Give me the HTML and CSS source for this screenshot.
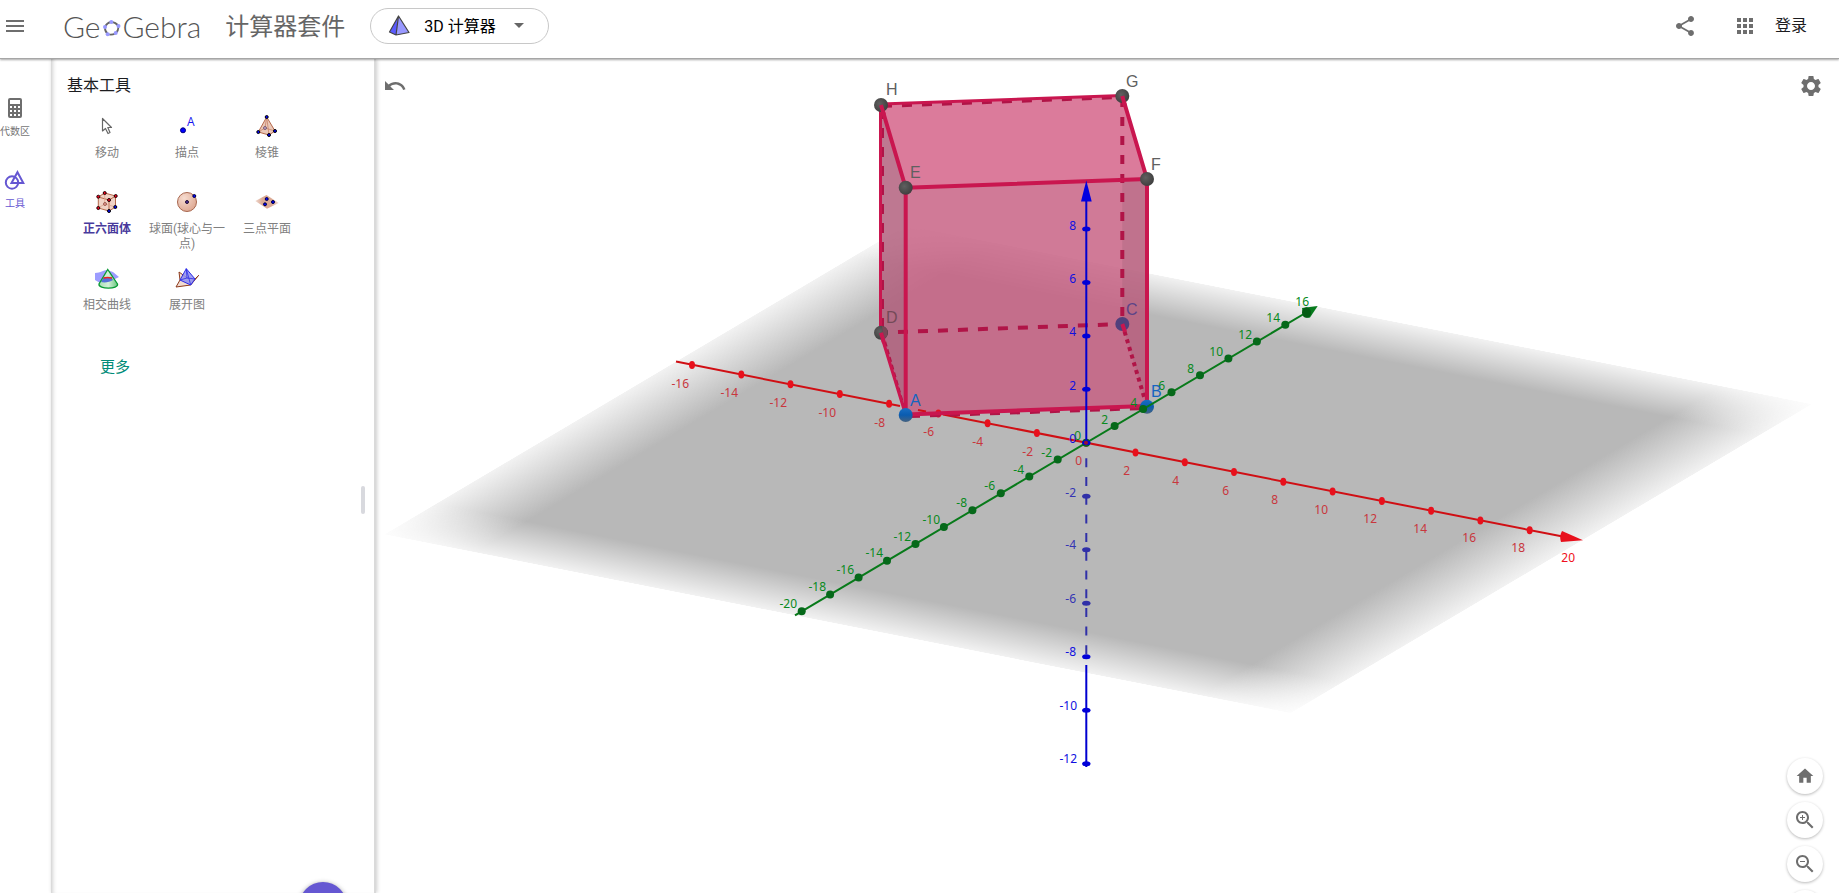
FILE: index.html
```html
<!DOCTYPE html>
<html lang="zh-CN">
<head>
<meta charset="utf-8">
<title>3D 计算器 - GeoGebra</title>
<link rel="stylesheet" href="styles.css">
</head>
<body class="app">
<header class="header">
  <button class="icon-btn menu-btn" aria-label="菜单">
    <svg width="24" height="24" viewBox="0 0 24 24"><path d="M3 18h18v-2H3v2zm0-5h18v-2H3v2zm0-7v2h18V6H3z"/></svg>
  </button>
  <a class="brand" href="#">
    <span class="logo">Ge<svg class="logo-o" width="18" height="18" viewBox="0 0 18 18"><path d="M8.300 3q4.500.3 7 4 .5 4.500-3 7.500-4 2-7.600.5Q1.500 12 2 8q2-4.500 6.300-5z" fill="none" stroke="#666" stroke-width="1.800"/><g fill="#9999ff"><circle cx="8.300" cy="3" r="2"/><circle cx="15.500" cy="7" r="2"/><circle cx="12.700" cy="14" r="2"/><circle cx="4.700" cy="15.200" r="2"/><circle cx="2" cy="8" r="2"/></g></svg>Gebra</span>
    <span class="suite">计算器套件</span>
  </a>
  <button class="app-picker">
    <svg width="22" height="22" viewBox="0 0 22 22"><path d="M10.500 1 1.500 17l6.500 3z" fill="#5b5bff"/><path d="M10.500 1 8 20l13-2.500z" fill="#9999ff"/><path d="M10.500 1 1.500 17 8 20l13-2.500zL8 20" fill="none" stroke="#444" stroke-width="1.200" stroke-linejoin="round"/></svg>
    <span class="app-name">3D 计算器</span>
    <svg class="caret" width="10" height="5" viewBox="0 0 10 5"><path d="M0 0h10L5 5z"/></svg>
  </button>
  <div class="header-actions">
    <button class="icon-btn" aria-label="分享">
      <svg width="24" height="24" viewBox="0 0 24 24"><path d="M18 16.080c-.76 0-1.440.3-1.960.77L8.910 12.700c.05-.23.09-.46.09-.7s-.04-.47-.09-.7l7.050-4.110c.54.5 1.250.81 2.040.81 1.660 0 3-1.340 3-3s-1.340-3-3-3-3 1.340-3 3c0 .24.04.47.09.7L8.040 9.810C7.500 9.310 6.790 9 6 9c-1.660 0-3 1.340-3 3s1.340 3 3 3c.79 0 1.500-.31 2.040-.81l7.120 4.160c-.05.21-.08.43-.08.65 0 1.610 1.310 2.920 2.920 2.920s2.920-1.310 2.920-2.920-1.310-2.920-2.920-2.920z"/></svg>
    </button>
    <button class="icon-btn apps-btn" aria-label="应用">
      <svg width="24" height="24" viewBox="0 0 24 24"><path d="M4 8h4V4H4v4zm6 12h4v-4h-4v4zm-6 0h4v-4H4v4zm0-6h4v-4H4v4zm6 0h4v-4h-4v4zm6-10v4h4V4h-4zm-6 4h4V4h-4v4zm6 6h4v-4h-4v4zm0 6h4v-4h-4v4z"/></svg>
    </button>
    <a class="login" href="#">登录</a>
  </div>
</header>

<div class="workspace">
  <nav class="rail">
    <button class="rail-btn">
      <svg width="24" height="24" viewBox="0 0 24 24"><path fill-rule="evenodd" d="M7 2h10a2 2 0 0 1 2 2v16a2 2 0 0 1-2 2H7a2 2 0 0 1-2-2V4a2 2 0 0 1 2-2zm0 2v4h10V4zm0 6v2h2v-2zm4 0v2h2v-2zm4 0v2h2v-2zm-8 4v2h2v-2zm4 0v2h2v-2zm4 0v2h2v-2zm-8 4v2h2v-2zm4 0v2h2v-2zm4 0v2h2v-2z"/></svg>
      <span>代数区</span>
    </button>
    <button class="rail-btn is-active">
      <svg width="24" height="24" viewBox="0 0 24 24" fill="none"><g stroke="currentColor" stroke-width="2"><circle cx="9" cy="14.500" r="6.200"/><path d="M14.500 4.200 20.300 15H8.500z"/></g></svg>
      <span>工具</span>
    </button>
  </nav>

  <aside class="panel">
    <h2 class="panel-title">基本工具</h2>
    <div class="tools">
      <button class="tool">
        <svg width="32" height="32" viewBox="0 0 32 32"><path d="M11.500 8.500v12.500l3-2.500 2.500 5 2-1-2.200-5h3.700z" fill="#fff" stroke="#666" stroke-width="1.200" stroke-linejoin="round"/></svg>
        <span>移动</span>
      </button>
      <button class="tool">
        <svg width="32" height="32" viewBox="0 0 32 32"><circle cx="12" cy="20.300" r="2.500" fill="#00f" stroke="#000080"/><text class="tool-glyph" x="16" y="16">A</text></svg>
        <span>描点</span>
      </button>
      <button class="tool">
        <svg width="32" height="32" viewBox="0 0 32 32"><path d="M15.700 7 7.300 22 18 25l6-4z" fill="#eac8b8" stroke="#b5694b"/><path d="M15.700 7 18 25M7.300 22 14 18l10 3M15.700 7 14 18" fill="none" stroke="#c98469" stroke-width=".8"/><g fill="#00f" stroke="#000"><circle cx="15.700" cy="7" r="1.500"/><circle cx="7.300" cy="22" r="1.500"/><circle cx="18" cy="25" r="1.500"/><circle cx="24" cy="21" r="1.500"/></g><circle cx="14" cy="18" r="1.500" fill="#b9a3cf" stroke="#6a4a5c" stroke-width=".8"/></svg>
        <span>棱锥</span>
      </button>
      <button class="tool is-selected">
        <svg width="32" height="32" viewBox="0 0 32 32"><path d="m7.300 11 6.400-4 11 3v11L18 25 7.300 22z" fill="#f0d2c5"/><path d="M7.300 11 13.700 7l11 3L18 14zV22L18 25V14M18 25l6.500-4V10" fill="none" stroke="#b5694b"/><path d="M13.700 7v11L7.300 22M13.700 18l11 3" fill="none" stroke="#dba58f" stroke-width=".8"/><g fill="#f00020" stroke="#200"><circle cx="13.700" cy="7" r="1.500"/><circle cx="24.700" cy="10" r="1.500"/><circle cx="7.300" cy="10.700" r="1.500"/><circle cx="18" cy="14" r="1.500"/><circle cx="7.300" cy="22" r="1.500"/></g><circle cx="14" cy="18" r="1.500" fill="#e59a94" stroke="#8b4a3c" stroke-width=".8"/><g fill="#00f" stroke="#000"><circle cx="24.300" cy="21" r="1.500"/><circle cx="18" cy="25" r="1.500"/></g></svg>
        <span>正六面体</span>
      </button>
      <button class="tool">
        <svg width="32" height="32" viewBox="0 0 32 32"><defs><radialGradient id="ball" cx=".35" cy=".3" r=".8"><stop offset="0" stop-color="#f6dcd0"/><stop offset="1" stop-color="#dca48d"/></radialGradient></defs><circle cx="16" cy="16" r="9.500" fill="url(#ball)" stroke="#a8674f"/><circle cx="16" cy="16" r="1.500" fill="#5030a0" stroke="#201030"/><circle cx="23.300" cy="10" r="1.500" fill="#00f" stroke="#000040"/></svg>
        <span>球面(球心与一点)</span>
      </button>
      <button class="tool">
        <svg width="32" height="32" viewBox="0 0 32 32"><defs><linearGradient id="sheet"><stop offset="0" stop-color="#efd9d0"/><stop offset=".3" stop-color="#dba994"/><stop offset=".7" stop-color="#dba994"/><stop offset="1" stop-color="#f0dcd4"/></linearGradient></defs><path d="m4.300 15 11.200-6 12.200 8L16 22.700z" fill="url(#sheet)"/><g fill="#00f" stroke="#000040"><circle cx="15.700" cy="13" r="1.500"/><circle cx="22" cy="16" r="1.500"/><circle cx="14" cy="18.300" r="1.500"/></g></svg>
        <span>三点平面</span>
      </button>
      <button class="tool">
        <svg width="32" height="32" viewBox="0 0 32 32"><defs><linearGradient id="cone"><stop offset="0" stop-color="#a8dfb4"/><stop offset=".5" stop-color="#d4f0d8"/><stop offset="1" stop-color="#6cc781"/></linearGradient></defs><path d="M4 11c6 0 8-3 12-3l6 2 6 5-6 3-13 3-5-3z" fill="#9c9cff"/><path d="M16.700 7.500 8 22c-1 5.500 20 5.500 18.500 0z" fill="url(#cone)"/><path d="M12.500 15.500 10 20c4 1 9 0 12-2l-1.500-2.500z" fill="#5570d8"/><path d="M16.700 7.500 8 22c-1 5.500 20 5.500 18.500 0z" fill="none" stroke="#0a9a35" stroke-width="1.300"/><path d="M12.500 16q4-1 8.500 0" fill="none" stroke="#f02020" stroke-width="1.500"/></svg>
        <span>相交曲线</span>
      </button>
      <button class="tool">
        <svg width="32" height="32" viewBox="0 0 32 32"><path d="M9 18 8 10l9 6.500M24 17l3.700-3.700L19.700 23 5 25l4-7" fill="#f2dcd1" stroke="#8d3a1c"/><path d="M15.300 6.700 9 18l10.700 5 4.300-6z" fill="#8f8ff0" fill-opacity=".85" stroke="#2b2be8"/><path d="M15.300 6.700 19.700 23M9 18l7-2 8 1M15.300 6.700 16 16" fill="none" stroke="#2b2be8" stroke-width=".8"/></svg>
        <span>展开图</span>
      </button>
    </div>
    <button class="more">更多</button>
    <div class="drag-handle"></div>
    <button class="fab" aria-label="帮助"></button>
  </aside>

  <main class="view">
    <svg class="scene" viewBox="376 59 1463 834" role="img" aria-label="3D 视图">
      <defs>
        <linearGradient id="fade-u"><stop offset="0" stop-color="#b8b8b8" stop-opacity=".18"/><stop offset=".1" stop-color="#b8b8b8"/><stop offset=".9" stop-color="#b8b8b8"/><stop offset="1" stop-color="#b8b8b8" stop-opacity=".18"/></linearGradient>
        <linearGradient id="fade-v" x2="0" y2="1"><stop offset="0" stop-color="#fff" stop-opacity=".18"/><stop offset=".1" stop-color="#fff"/><stop offset=".9" stop-color="#fff"/><stop offset="1" stop-color="#fff" stop-opacity=".18"/></linearGradient>
        <mask id="plane-mask" maskUnits="userSpaceOnUse" x="0" y="0" width="1000" height="1000"><rect width="1000" height="1000" fill="url(#fade-v)"/></mask>
        <radialGradient id="dark-ball" cx=".4" cy=".4" r=".6"><stop offset="0" stop-color="#606060"/><stop offset="1" stop-color="#404040"/></radialGradient>
        <linearGradient id="blue-ball" x2="0" y2="1"><stop offset="0" stop-color="#1a6fc4"/><stop offset=".5" stop-color="#0a5cb0"/><stop offset="1" stop-color="#46627f"/></linearGradient>
        <marker id="tick-x" markerUnits="userSpaceOnUse" markerWidth="10" markerHeight="10" refX="5" refY="5"><ellipse cx="5" cy="5" rx="3" ry="4" fill="#e8101c"/></marker>
        <marker id="tick-y" markerUnits="userSpaceOnUse" markerWidth="10" markerHeight="10" refX="5" refY="5"><circle cx="5" cy="5" r="4" fill="#06691a"/></marker>
        <marker id="tick-z" markerUnits="userSpaceOnUse" markerWidth="10" markerHeight="6" refX="5" refY="3"><ellipse cx="5" cy="3" rx="4.200" ry="2.500" fill="#0000d8"/></marker>
        <marker id="tick-z-dim" markerUnits="userSpaceOnUse" markerWidth="10" markerHeight="6" refX="5" refY="3"><ellipse cx="5" cy="3" rx="4.200" ry="2.500" fill="#3030a8"/></marker>
      </defs>

      <g transform="matrix(.9067 .1788 .5218 -.3093 384 534.5)"><rect width="1000" height="1000" fill="url(#fade-u)" mask="url(#plane-mask)"/></g>

      <!-- cube faces -->
      <path d="M881 105 905.700 187.700V415L881 332.700z" fill="#b05a79" fill-opacity=".82"/>
      <path d="M881 105 1122.300 96 1147 179 905.700 187.700z" fill="#d35e85" fill-opacity=".82"/>
      <path d="M905.700 187.700 1147 179V406.700L905.700 415z" fill="#c65f82" fill-opacity=".83"/>
      <path d="M1122.300 180 1147 179V406.700L1122.300 324z" fill="#905a70" fill-opacity=".25"/>

      <!-- x axis -->
      <path d="M676 361.600 900 406M943 414.500 1564 536.800" class="axis axis-x"/>
      <path d="M918 410l8 1.500" class="axis axis-x"/>
      <polyline class="ticks-x" points="642.700,353 692,364.900 741.300,374.600 790.500,384.300 839.800,394.100 889.100,403.800 938.400,413.500 987.600,423.300 1036.900,433 1086.200,442.700 1135.500,452.500 1184.800,462.200 1234,471.900 1283.300,481.700 1332.600,491.400 1381.900,501.100 1431.100,510.800 1480.400,520.600 1529.700,530.300 1582,540"/>
      <path d="M1562 531 1583 540.300 1561 542q-2-5.500 1-11z" fill="#e8101c"/>

      <!-- hidden cube edges -->
      <g class="edge edge-hidden">
        <path d="M1122.300 324V96" stroke-dasharray="9 10" stroke-dashoffset="-8"/>
        <path d="M881 332.700 1122.300 324" stroke-dasharray="10 10" stroke-dashoffset="3"/>
        <path d="M1122.300 324 1147 406.700" stroke-dasharray="4 4"/>
        <path d="M882 106 1120 97" stroke-dasharray="10 10"/>
        <path d="M882 109V332" stroke-dasharray="10 9"/>
        <path d="M883 334 905 410" stroke-dasharray="5 3" stroke-width="2"/>
        <path d="M910 416 1144 408" stroke-dasharray="10 10"/>
      </g>
      <!-- visible cube edges -->
      <g class="edge">
        <path d="M880.500 105V332.700L905.700 415" stroke-width="3"/>
        <path d="M905.700 414.500 1147 406"/>
        <path d="M881 104 1122.300 95.500" stroke-width="3"/>
        <path d="M881 105 905.700 187.700 1147 179 1122.300 96M905.700 187.700V415M1147 179V406.700"/>
      </g>

      <circle cx="881" cy="105" r="7" fill="url(#dark-ball)"/>
      <circle cx="1122.300" cy="96" r="7" fill="url(#dark-ball)"/>
      <circle cx="905.700" cy="187.700" r="7" fill="url(#dark-ball)"/>
      <circle cx="1147" cy="179" r="7" fill="url(#dark-ball)"/>
      <circle cx="881" cy="332.700" r="7" fill="url(#dark-ball)"/>
      <path d="M882 326a7 7 0 0 1 2 13z" fill="#7a4656"/>
      <circle cx="1122.300" cy="324" r="7" fill="#50407c"/>
      <circle cx="905.700" cy="415" r="7" fill="url(#blue-ball)"/>
      <circle cx="1147" cy="406.700" r="7" fill="url(#blue-ball)"/>
      <path d="M881 332.700 884 343M881 105 884 115M1122.300 324 1125 332M1122.300 96 1125 106" class="edge" stroke-width="3"/>

      <!-- y axis -->
      <path d="M795 615.300 1308 311.500" class="axis axis-y"/>
      <polyline class="ticks-y" points="773,628 801.700,611.300 830.100,594.500 858.600,577.600 887,560.800 915.500,543.900 943.900,527 972.400,510.200 1000.800,493.300 1029.300,476.500 1057.700,459.600 1086.200,442.700 1114.600,425.900 1143.100,409 1171.500,392.200 1200,375.300 1228.400,358.400 1256.900,341.600 1285.300,324.700 1313,308"/>
      <path d="M1302 308 1317.700 306 1310 317.500q-7 2-8-9.500z" fill="#067a1c"/>
      <ellipse cx="1306.500" cy="312.500" rx="4.500" ry="5.200" fill="#045c14"/>

      <!-- z axis -->
      <path d="M1086.300 200V442.700M1086.300 665V767" class="axis axis-z"/>
      <path d="M1086.300 458.300V656" class="axis axis-z-dim" stroke-dasharray="9 9.700"/>
      <polyline class="ticks-z" points="1086.300,180 1086.300,229 1086.300,282.500 1086.300,336 1086.300,389.300 1086.300,442.700 1086.300,449"/>
      <polyline class="ticks-z-dim" points="1086.300,449 1086.300,496.200 1086.300,549.700 1086.300,603.200 1086.300,650"/>
      <polyline class="ticks-z" points="1086.300,650 1086.300,656.700 1086.300,710.200 1086.300,763.700 1086.300,767"/>
      <path d="M1086.300 180.500 1091.700 201.500H1081z" fill="#0000e0"/>
      <circle cx="1086" cy="442.700" r="2" fill="#9a1030"/>

      <g class="num num-x">
        <text x="689" y="388">-16</text><text x="738" y="397">-14</text><text x="787" y="407">-12</text><text x="836" y="417">-10</text><text x="885" y="427">-8</text><text x="934" y="436">-6</text><text x="983" y="446">-4</text><text x="1033" y="456">-2</text><text x="1082" y="465">0</text><text x="1130" y="475">2</text><text x="1179" y="485">4</text><text x="1229" y="495">6</text><text x="1278" y="504">8</text><text x="1328" y="514">10</text><text x="1377" y="523">12</text><text x="1427" y="533">14</text><text x="1476" y="542">16</text><text x="1525" y="552">18</text><text x="1575" y="562" class="num-edge">20</text>
      </g>
      <g class="num num-y">
        <text x="797" y="608">-20</text><text x="826" y="591">-18</text><text x="854" y="574">-16</text><text x="883" y="557">-14</text><text x="911" y="541">-12</text><text x="940" y="524">-10</text><text x="967" y="507">-8</text><text x="995" y="490">-6</text><text x="1024" y="474">-4</text><text x="1052" y="457">-2</text><text x="1081" y="440">0</text><text x="1108" y="424">2</text><text x="1137" y="407">4</text><text x="1165" y="390">6</text><text x="1194" y="373">8</text><text x="1223" y="356">10</text><text x="1252" y="339">12</text><text x="1280" y="322">14</text><text x="1309" y="306">16</text>
      </g>
      <g class="num num-z">
        <text x="1076" y="230">8</text><text x="1076" y="283">6</text><text x="1076" y="336">4</text><text x="1076" y="390">2</text><text x="1076" y="443">0</text>
        <g class="num-z-dim"><text x="1076" y="497">-2</text><text x="1076" y="549">-4</text><text x="1076" y="603">-6</text></g>
        <text x="1076" y="656">-8</text><text x="1077" y="710">-10</text><text x="1077" y="763">-12</text>
      </g>
      <g class="pt">
        <text x="886" y="95">H</text><text x="1126" y="87">G</text><text x="910" y="178">E</text><text x="1151" y="170">F</text><text x="886" y="323" fill="#744a58">D</text><text x="1126" y="315" fill="#5c4488">C</text><text x="910" y="406" class="pt-free">A</text><text x="1151" y="397" class="pt-free">B</text>
      </g>
    </svg>

    <button class="icon-btn undo" aria-label="撤销">
      <svg width="24" height="24" viewBox="0 0 24 24"><path d="M12.500 8c-2.650 0-5.050.99-6.900 2.600L2 7v9h9l-3.620-3.620c1.390-1.160 3.160-1.880 5.120-1.880 3.540 0 6.550 2.310 7.600 5.500l2.370-.78C21.080 11.030 17.150 8 12.500 8z"/></svg>
    </button>
    <button class="icon-btn settings" aria-label="设置">
      <svg width="24" height="24" viewBox="0 0 24 24"><path d="M19.430 12.980c.04-.32.07-.64.07-.98s-.03-.66-.07-.98l2.110-1.650c.19-.15.24-.42.12-.64l-2-3.460c-.12-.22-.39-.3-.61-.22l-2.490 1c-.52-.4-1.080-.73-1.690-.98l-.38-2.650C14.460 2.180 14.250 2 14 2h-4c-.25 0-.46.18-.49.42l-.38 2.650c-.61.25-1.170.59-1.690.98l-2.490-1c-.23-.09-.49 0-.61.22l-2 3.460c-.13.22-.07.49.12.64l2.110 1.650c-.04.32-.07.65-.07.98s.03.66.07.98l-2.110 1.650c-.19.15-.24.42-.12.64l2 3.460c.12.22.39.3.61.22l2.490-1c.52.4 1.080.73 1.690.98l.38 2.650c.03.24.24.42.49.42h4c.25 0 .46-.18.49-.42l.38-2.650c.61-.25 1.170-.59 1.690-.98l2.490 1c.23.09.49 0 .61-.22l2-3.460c.12-.22.07-.49-.12-.64l-2.110-1.650zM12 16c-2.210 0-4-1.790-4-4s1.790-4 4-4 4 1.790 4 4-1.790 4-4 4z"/></svg>
    </button>
    <div class="zoom-tools">
      <button class="round-btn" aria-label="标准视图"><svg width="20" height="20" viewBox="0 0 24 24"><path d="M10 20v-6h4v6h5v-8h3L12 3 2 12h3v8z"/></svg></button>
      <button class="round-btn" aria-label="放大"><svg width="24" height="24" viewBox="0 0 24 24"><path d="M15.500 14h-.79l-.28-.27C15.410 12.590 16 11.110 16 9.500 16 5.910 13.090 3 9.500 3S3 5.910 3 9.500 5.910 16 9.500 16c1.610 0 3.090-.59 4.230-1.570l.27.28v.79l5 4.990L20.490 19l-4.990-5zm-6 0C7.010 14 5 11.990 5 9.500S7.010 5 9.500 5 14 7.010 14 9.500 11.990 14 9.500 14zM12 10h-2v2H9v-2H7V9h2V7h1v2h2v1z"/></svg></button>
      <button class="round-btn" aria-label="缩小"><svg width="24" height="24" viewBox="0 0 24 24"><path d="M15.500 14h-.79l-.28-.27C15.410 12.590 16 11.110 16 9.500 16 5.910 13.090 3 9.500 3S3 5.910 3 9.500 5.910 16 9.500 16c1.610 0 3.090-.59 4.230-1.570l.27.28v.79l5 4.990L20.490 19l-4.990-5zm-6 0C7.010 14 5 11.990 5 9.500S7.010 5 9.500 5 14 7.010 14 9.500 11.990 14 9.500 14zM7 9h5v1H7z"/></svg></button>
      <button class="round-btn" aria-label="全屏"></button>
    </div>
  </main>
</div>
</body>
</html>
```
FILE: styles.css
```css
* { box-sizing: border-box; }

.app {
  margin: 0;
  height: 100vh;
  display: flex;
  flex-direction: column;
  overflow: hidden;
  background: #fff;
  color: #1c1c1f;
  font-family: Roboto, "Noto Sans CJK SC", sans-serif;
}

button {
  margin: 0;
  padding: 0;
  border: 0;
  background: none;
  font: inherit;
  color: inherit;
  cursor: pointer;
}

svg { display: block; flex: none; }
a { color: inherit; text-decoration: none; }

.header {
  position: relative;
  z-index: 3;
  flex: none;
  display: flex;
  align-items: center;
  height: 59px;
  padding: 0 32px 7px 3px;
  background: #fff;
  border-bottom: 1px solid #a6a6a6;
  box-shadow: 0 1px 2px rgba(0, 0, 0, .35);
}

.icon-btn { display: flex; fill: #6e6e6e; }
.brand { display: flex; align-items: center; margin-left: 36px; color: #666; }
.logo {
  display: flex;
  align-items: center;
  color: #555;
  font: 300 30px/32px Lato, sans-serif;
}
.logo-o { margin: 4px 2px 0; }
.suite { margin-left: 24px; font-size: 24px; line-height: 36px; padding-top: 2px; }

.app-picker {
  display: flex;
  align-items: center;
  height: 36px;
  margin-left: 25px;
  padding: 0 24px 0 17px;
  border: 1px solid #c8c8c8;
  border-radius: 18px;
  color: #000;
  font-size: 16px;
}
.app-name { margin: 0 0 2px 14px; }
.caret { margin-left: 18px; fill: #666; }

.header-actions { display: flex; align-items: center; margin-left: auto; font-size: 16px; }
.apps-btn { margin-left: 36px; }
.login { margin-left: 18px; padding-bottom: 4px; }

.workspace { flex: 1; display: flex; min-height: 0; }

.rail {
  flex: none;
  width: 51px;
  padding-top: 37px;
  display: flex;
  flex-direction: column;
  gap: 28px;
}
.rail-btn {
  display: flex;
  flex-direction: column;
  align-items: center;
  gap: 4px;
  width: 30px;
  height: 44px;
  font-size: 10px;
  line-height: 16px;
  color: #757575;
  fill: #6e6e6e;
  white-space: nowrap;
}
.rail-btn.is-active { color: #6557d2; }

.panel {
  position: relative;
  z-index: 1;
  flex: none;
  width: 325px;
  padding: 15px 16px;
  background: #fff;
  box-shadow: 1px 0 4px rgba(0, 0, 0, .2), inset 5px 0 5px -4px rgba(0, 0, 0, .25);
  border-right: 2px solid #dadada;
}
.panel-title { margin: 0; font-size: 16px; font-weight: 400; line-height: 24px; }
.tools {
  display: grid;
  grid-template-columns: repeat(3, 80px);
  grid-auto-rows: 76px;
  margin-top: 12px;
}
.tool {
  display: flex;
  flex-direction: column;
  align-items: center;
  font-size: 12px;
  line-height: 15px;
  color: #808080;
}
.tool svg { margin-bottom: 4px; }
.tool.is-selected { color: #483a9c; font-weight: 700; }
.tool-glyph { font: 12px "Open Sans", sans-serif; fill: #1515f0; }

.more { margin: 17px 33px; font-size: 15px; line-height: 24px; color: #008c79; }

.drag-handle {
  position: absolute;
  right: 9px;
  top: 427px;
  width: 4px;
  height: 28px;
  border-radius: 2px;
  background: #d8d9de;
}
.fab {
  position: absolute;
  right: 27px;
  bottom: -37px;
  width: 48px;
  height: 48px;
  border-radius: 50%;
  background: #6557d2;
  box-shadow: 0 1px 5px rgba(0, 0, 0, .4);
}

.view { position: relative; flex: 1; min-width: 0; overflow: hidden; }
.scene { width: 100%; height: 100%; }

.undo { position: absolute; left: 7px; top: 15px; }
.settings { position: absolute; right: 16px; top: 15px; }
.zoom-tools {
  position: absolute;
  right: 16px;
  bottom: -33px;
  display: flex;
  flex-direction: column;
  gap: 8px;
}
.round-btn {
  display: flex;
  align-items: center;
  justify-content: center;
  width: 36px;
  height: 36px;
  border-radius: 50%;
  background: #fff;
  fill: #6e6e6e;
  box-shadow: 0 1px 3px rgba(0, 0, 0, .28);
}

.axis { fill: none; stroke-width: 2; }
.axis-x { stroke: #d00f14; }
.axis-y { stroke: #087a1a; }
.axis-z { stroke: #0000d0; }
.axis-z-dim { stroke: #3030a8; }
.ticks-x { fill: none; marker-mid: url(#tick-x); }
.ticks-y { fill: none; marker-mid: url(#tick-y); }
.ticks-z { fill: none; marker-mid: url(#tick-z); }
.ticks-z-dim { fill: none; marker-mid: url(#tick-z-dim); }
.edge { fill: none; stroke: #c9164f; stroke-width: 4; stroke-linejoin: round; }
.edge-hidden { stroke: #b01447; }
.num { font: 12px "Noto Sans", sans-serif; text-anchor: end; }
.num-x { fill: #c8373d; }
.num-edge { fill: #f01020; }
.num-y { fill: #088a20; }
.num-z { fill: #1010e0; }
.num-z-dim { fill: #3434b4; }
.pt { font: 16px "Liberation Sans", sans-serif; fill: #606060; }
.pt-free { fill: #1565c0; }
```
